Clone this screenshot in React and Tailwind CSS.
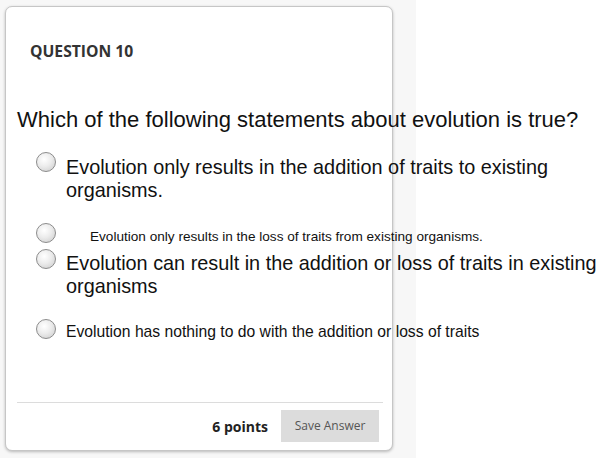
const sans = "font-['Liberation_Sans',Arial,sans-serif]"
const open = "font-['Open_Sans',sans-serif]"

function Radio({ className = '' }) {
  return (
    <span
      className={`block w-[20px] h-[20px] shrink-0 rounded-full border border-[#8c8c8c] bg-[radial-gradient(circle_at_40%_35%,#ffffff_0%,#ececec_45%,#c9c9c9_100%)] ${className}`}
    />
  )
}

export default function App() {
  return (
    <div className="w-[602px] h-[458px] bg-white overflow-hidden">
      <div className="w-[416px] h-[458px] bg-[#f7f7f7] pt-[6px] pl-[5px]">
        <div className="w-[388px] h-[445px] rounded-[7px] border border-[#c6c6c6] bg-white shadow-[0_1px_3px_rgba(0,0,0,0.25)] flex flex-col pb-[8px]">
          {/* Header */}
          <div className={`${open} mt-[34px] pl-[24px] text-[15.7px] leading-[20px] font-bold text-[#333]`}>
            QUESTION 10
          </div>

          {/* Question */}
          <div className={`${sans} mt-[46px] pl-[11px] text-[22px] leading-[26px] text-[#111] whitespace-nowrap`}>
            Which of the following statements about evolution is true?
          </div>

          {/* Answers */}
          <div className={`${sans} text-[#111]`}>
            <div className="mt-[19px] pl-[30px] flex items-start">
              <Radio />
              <div className="ml-[10px] mt-[4px] text-[19.85px] leading-[23px] whitespace-nowrap">
                Evolution only results in the addition of traits to existing
                <br />
                organisms.
              </div>
            </div>

            <div className="mt-[21px] pl-[30px] flex items-start">
              <Radio />
              <div className="ml-[34px] mt-[6px] text-[13.6px] leading-[16px] whitespace-nowrap">
                Evolution only results in the loss of traits from existing organisms.
              </div>
            </div>

            <div className="mt-[4px] pl-[30px] flex items-start">
              <Radio />
              <div className="ml-[10px] mt-[3px] text-[19.85px] leading-[23px] whitespace-nowrap">
                Evolution can result in the addition or loss of traits in existing
                <br />
                organisms
              </div>
            </div>

            <div className="mt-[21px] pl-[30px] flex items-start">
              <Radio />
              <div className="ml-[10px] mt-[3px] text-[15.7px] leading-[20px] whitespace-nowrap">
                Evolution has nothing to do with the addition or loss of traits
              </div>
            </div>
          </div>

          {/* Footer */}
          <div className="mt-auto ml-[11px] w-[366px] border-t border-[#dcdcdc]" />
          <div className="mt-[7px] flex items-center justify-end pr-[13px]">
            <span className={`${open} text-[14px] font-bold text-[#222] mr-[13px]`}>6 points</span>
            <button className={`${open} w-[98px] h-[32px] bg-[#dcdcdc] text-[12px] text-[#555]`}>
              Save Answer
            </button>
          </div>
        </div>
      </div>
    </div>
  )
}
